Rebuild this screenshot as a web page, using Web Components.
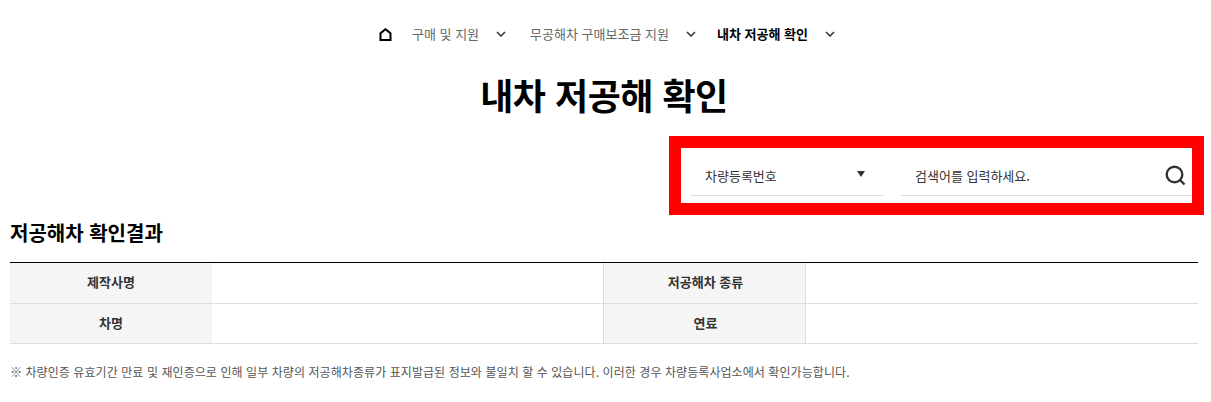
<!DOCTYPE html>
<html lang="ko">
<head>
<meta charset="utf-8">
<title>내차 저공해 확인</title>
<style>
  html, body { margin: 0; background: #fff; }
  body { font-family: "Noto Sans CJK KR", "Noto Sans", sans-serif; color: #000; width: 1211px; height: 402px; overflow: hidden; }
</style>
</head>
<body>
<app-page>
  <bread-crumbs>
    <crumb-item>구매 및 지원</crumb-item>
    <crumb-item class="second">무공해차 구매보조금 지원</crumb-item>
    <crumb-item current>내차 저공해 확인</crumb-item>
  </bread-crumbs>
  <page-title>내차 저공해 확인</page-title>
  <search-box label="차량등록번호" placeholder="검색어를 입력하세요."></search-box>
  <result-table heading="저공해차 확인결과">
    <result-row first-label="제작사명" second-label="저공해차 종류"></result-row>
    <result-row first-label="차명" second-label="연료"></result-row>
  </result-table>
  <foot-note>※ 차량인증 유효기간 만료 및 재인증으로 인해 일부 차량의 저공해차종류가 표지발급된 정보와 불일치 할 수 있습니다. 이러한 경우 차량등록사업소에서 확인가능합니다.</foot-note>
</app-page>

<script>
class AppPage extends HTMLElement {
  constructor() {
    super();
    this.attachShadow({ mode: 'open' }).innerHTML = `
      <style>
        :host { display: block; }
      </style>
      <slot></slot>
    `;
  }
}

class BreadCrumbs extends HTMLElement {
  constructor() {
    super();
    this.attachShadow({ mode: 'open' }).innerHTML = `
      <style>
        :host { display: flex; justify-content: flex-start; align-items: center; height: 24px; padding-top: 22px; padding-left: 379px; }
        svg { display: block; margin-right: 20px; }
      </style>
      <svg width="13" height="13" viewBox="0 0 13 13" fill="none" stroke="#000" stroke-width="2">
        <path d="M1.5 12V5.2L6.5 1.2L11.5 5.2V12Z"/>
      </svg>
      <slot></slot>
    `;
  }
}

class CrumbItem extends HTMLElement {
  constructor() {
    super();
    this.attachShadow({ mode: 'open' }).innerHTML = `
      <style>
        :host { display: flex; align-items: center; font-size: 13px; line-height: 24px; color: #666; margin-right: 24px; }
        :host(.second) { margin-right: 21px; }
        :host([current]) { color: #000; font-weight: 700; margin-right: 0; }
        svg { display: block; margin-left: 17px; }
      </style>
      <slot></slot>
      <svg width="10" height="6" viewBox="0 0 10 6" fill="none" stroke="#333" stroke-width="1.5">
        <path d="M1 1L5 5L9 1"/>
      </svg>
    `;
  }
}

class PageTitle extends HTMLElement {
  constructor() {
    super();
    this.attachShadow({ mode: 'open' }).innerHTML = `
      <style>
        :host { display: block; margin-top: 21px; padding-right: 3px; text-align: center; font-size: 36px; line-height: 54px; font-weight: 700; color: #000; letter-spacing: -0.5px; }
      </style>
      <slot></slot>
    `;
  }
}

class SearchBox extends HTMLElement {
  constructor() {
    super();
    this.attachShadow({ mode: 'open' }).innerHTML = `
      <style>
        :host { display: flex; justify-content: flex-end; margin-top: 15px; padding-right: 7px; }
        .frame { box-sizing: border-box; width: 535px; height: 79px; border: 12px solid #f00; background: #fff; display: flex; padding: 0 0 7px 10px; gap: 17px; align-items: flex-end; font-size: 13px; color: #333; }
        .field { display: flex; align-items: center; height: 40px; border-bottom: 1px solid #ddd; box-sizing: border-box; }
        .select { width: 193px; padding: 0 19px 0 14px; justify-content: space-between; box-sizing: border-box; }
        .input { flex: 1; padding: 0 6px 0 14px; justify-content: space-between; }
        .caret { width: 0; height: 0; border-left: 4px solid transparent; border-right: 4px solid transparent; border-top: 6px solid #333; margin-top: -3px; }
        svg { display: block; }
      </style>
      <div class="frame">
        <div class="field select"><span id="label"></span><i class="caret"></i></div>
        <div class="field input">
          <span id="hint"></span>
          <svg width="21" height="21" viewBox="0 0 21 21" fill="none" stroke="#333" stroke-width="2.4">
            <circle cx="9.5" cy="9.5" r="7.8"/>
            <path d="M15 15L19.5 19.5"/>
          </svg>
        </div>
      </div>
    `;
    this.shadowRoot.getElementById('label').textContent = this.getAttribute('label');
    this.shadowRoot.getElementById('hint').textContent = this.getAttribute('placeholder');
  }
}

class ResultTable extends HTMLElement {
  constructor() {
    super();
    this.attachShadow({ mode: 'open' }).innerHTML = `
      <style>
        :host { display: block; margin: 0 13px 0 10px; }
        h2 { margin: 0; padding-top: 3px; font-size: 20px; line-height: 30px; font-weight: 700; color: #000; }
        .rows { margin-top: 14px; border-top: 1px solid #000; }
      </style>
      <h2></h2>
      <div class="rows"><slot></slot></div>
    `;
    this.shadowRoot.querySelector('h2').textContent = this.getAttribute('heading');
  }
}

class ResultRow extends HTMLElement {
  constructor() {
    super();
    this.attachShadow({ mode: 'open' }).innerHTML = `
      <style>
        :host { display: grid; grid-template-columns: 202px 391px 203px 1fr; height: 40px; box-sizing: border-box; border-bottom: 1px solid #ddd; font-size: 13px; line-height: 20px; }
        :host(:first-child) { height: 41px; }
        .th { display: flex; align-items: center; justify-content: center; box-sizing: border-box; padding-bottom: 2px; background: #f5f5f5; font-weight: 700; color: #333; }
        .side { border-left: 1px solid #ddd; border-right: 1px solid #ddd; padding-left: 2px; }
      </style>
      <div class="th" id="first"></div>
      <div></div>
      <div class="th side" id="second"></div>
      <div></div>
    `;
    this.shadowRoot.getElementById('first').textContent = this.getAttribute('first-label');
    this.shadowRoot.getElementById('second').textContent = this.getAttribute('second-label');
  }
}

class FootNote extends HTMLElement {
  constructor() {
    super();
    this.attachShadow({ mode: 'open' }).innerHTML = `
      <style>
        :host { display: block; margin: 18px 10px 0; font-size: 12px; line-height: 20px; color: #555; letter-spacing: 0.07px; }
      </style>
      <slot></slot>
    `;
  }
}

customElements.define('app-page', AppPage);
customElements.define('bread-crumbs', BreadCrumbs);
customElements.define('crumb-item', CrumbItem);
customElements.define('page-title', PageTitle);
customElements.define('search-box', SearchBox);
customElements.define('result-table', ResultTable);
customElements.define('result-row', ResultRow);
customElements.define('foot-note', FootNote);
</script>
</body>
</html>
